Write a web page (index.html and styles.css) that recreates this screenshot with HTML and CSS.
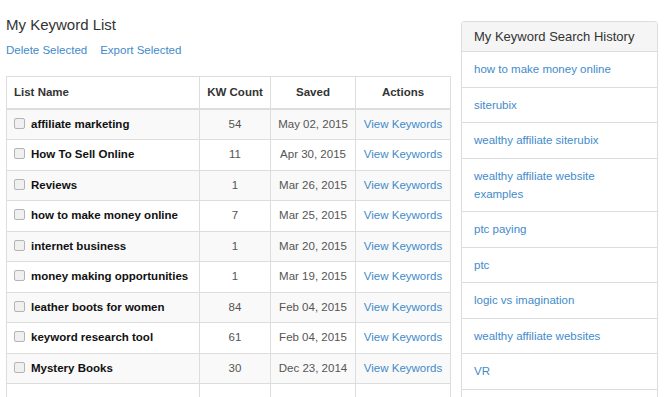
FILE: index.html
```html
<!DOCTYPE html>
<html>
<head>
    <meta charset="UTF-8">
    <title>My Keyword List</title>
    <link rel="stylesheet" href="styles.css">
</head>
<body>
<div class="page">
    <div class="main_col">
        <p class="main_title">My Keyword List</p>
        <p class="actions_bar"><a href="#">Delete Selected</a><a href="#">Export Selected</a></p>
        <table class="kw_table">
            <colgroup>
                <col class="c_name">
                <col class="c_count">
                <col class="c_saved">
                <col class="c_actions">
            </colgroup>
            <thead>
            <tr><th class="left">List Name</th><th>KW Count</th><th>Saved</th><th>Actions</th></tr>
            </thead>
            <tbody>
            <tr><td class="name"><input type="checkbox" class="chk">affiliate marketing</td><td>54</td><td>May 02, 2015</td><td><a href="#">View Keywords</a></td></tr>
            <tr><td class="name"><input type="checkbox" class="chk">How To Sell Online</td><td>11</td><td>Apr 30, 2015</td><td><a href="#">View Keywords</a></td></tr>
            <tr><td class="name"><input type="checkbox" class="chk">Reviews</td><td>1</td><td>Mar 26, 2015</td><td><a href="#">View Keywords</a></td></tr>
            <tr><td class="name"><input type="checkbox" class="chk">how to make money online</td><td>7</td><td>Mar 25, 2015</td><td><a href="#">View Keywords</a></td></tr>
            <tr><td class="name"><input type="checkbox" class="chk">internet business</td><td>1</td><td>Mar 20, 2015</td><td><a href="#">View Keywords</a></td></tr>
            <tr><td class="name"><input type="checkbox" class="chk">money making opportunities</td><td>1</td><td>Mar 19, 2015</td><td><a href="#">View Keywords</a></td></tr>
            <tr><td class="name"><input type="checkbox" class="chk">leather boots for women</td><td>84</td><td>Feb 04, 2015</td><td><a href="#">View Keywords</a></td></tr>
            <tr><td class="name"><input type="checkbox" class="chk">keyword research tool</td><td>61</td><td>Feb 04, 2015</td><td><a href="#">View Keywords</a></td></tr>
            <tr><td class="name"><input type="checkbox" class="chk">Mystery Books</td><td>30</td><td>Dec 23, 2014</td><td><a href="#">View Keywords</a></td></tr>
            <tr><td class="name">&nbsp;</td><td></td><td></td><td></td></tr>
            </tbody>
        </table>
    </div>
    <div class="side_col">
        <div class="panel">
            <div class="panel_heading">My Keyword Search History</div>
            <ul class="history">
                <li><a href="#">how to make money online</a></li>
                <li><a href="#">siterubix</a></li>
                <li><a href="#">wealthy affiliate siterubix</a></li>
                <li><a href="#">wealthy affiliate website examples</a></li>
                <li><a href="#">ptc paying</a></li>
                <li><a href="#">ptc</a></li>
                <li><a href="#">logic vs imagination</a></li>
                <li><a href="#">wealthy affiliate websites</a></li>
                <li><a href="#">VR</a></li>
                <li>&nbsp;</li>
            </ul>
        </div>
    </div>
</div>
</body>
</html>
```

FILE: styles.css
```css
body {
    margin: 0;
    padding: 0 6px;
    font-family: "Liberation Sans", Arial, sans-serif;
    font-size: 11.5px;
    color: #333;
    background: #fff;
    overflow: hidden;
}
a {
    color: #428bca;
    text-decoration: none;
}
p {
    margin: 0;
}
.page {
    display: flex;
    gap: 11px;
    align-items: flex-start;
}
.main_col {
    width: 444px;
}
.side_col {
    width: 197px;
    padding-top: 21px;
}
.main_title {
    font-size: 15px;
    line-height: 20px;
    padding-top: 15px;
    color: #333;
}
.actions_bar {
    line-height: 17px;
    margin-top: 7px;
    margin-bottom: 17px;
}
.actions_bar a {
    margin-right: 13px;
}
.kw_table {
    width: 444px;
    table-layout: fixed;
    border-collapse: collapse;
}
.c_name { width: 193px; }
.c_count { width: 71px; }
.c_saved { width: 85px; }
.c_actions { width: 95px; }
.kw_table th,
.kw_table td {
    border: 1px solid #ddd;
    padding: 6px 7px;
    line-height: 17.5px;
    text-align: center;
    white-space: nowrap;
}
.kw_table th {
    font-weight: bold;
    color: #333;
    border-bottom-width: 2px;
    padding-top: 7px;
}
.kw_table th.left {
    text-align: left;
}
.kw_table td {
    color: #555;
}
.kw_table td.name {
    text-align: left;
    font-weight: bold;
    color: #111;
}
.kw_table tbody tr:nth-child(odd) {
    background: #f9f9f9;
}
.kw_table tbody tr:last-child {
    background: #fff;
}
.chk {
    -webkit-appearance: none;
    appearance: none;
    width: 11px;
    height: 11px;
    margin: 0 6px 0 0;
    border: 1px solid #b4b4b4;
    border-radius: 2px;
    background: #f0f0f0;
    vertical-align: -1px;
}
.panel {
    border: 1px solid #ddd;
    border-radius: 3px;
    box-shadow: 0 1px 1px rgba(0, 0, 0, 0.05);
}
.panel_heading {
    background: #f5f5f5;
    border-bottom: 1px solid #ddd;
    padding: 6px 12px;
    font-size: 13px;
    line-height: 17px;
    color: #333;
}
.history {
    list-style: none;
    margin: 0;
    padding: 0;
}
.history li {
    padding: 8.25px 12px;
    line-height: 18px;
    border-bottom: 1px solid #ddd;
}
```
